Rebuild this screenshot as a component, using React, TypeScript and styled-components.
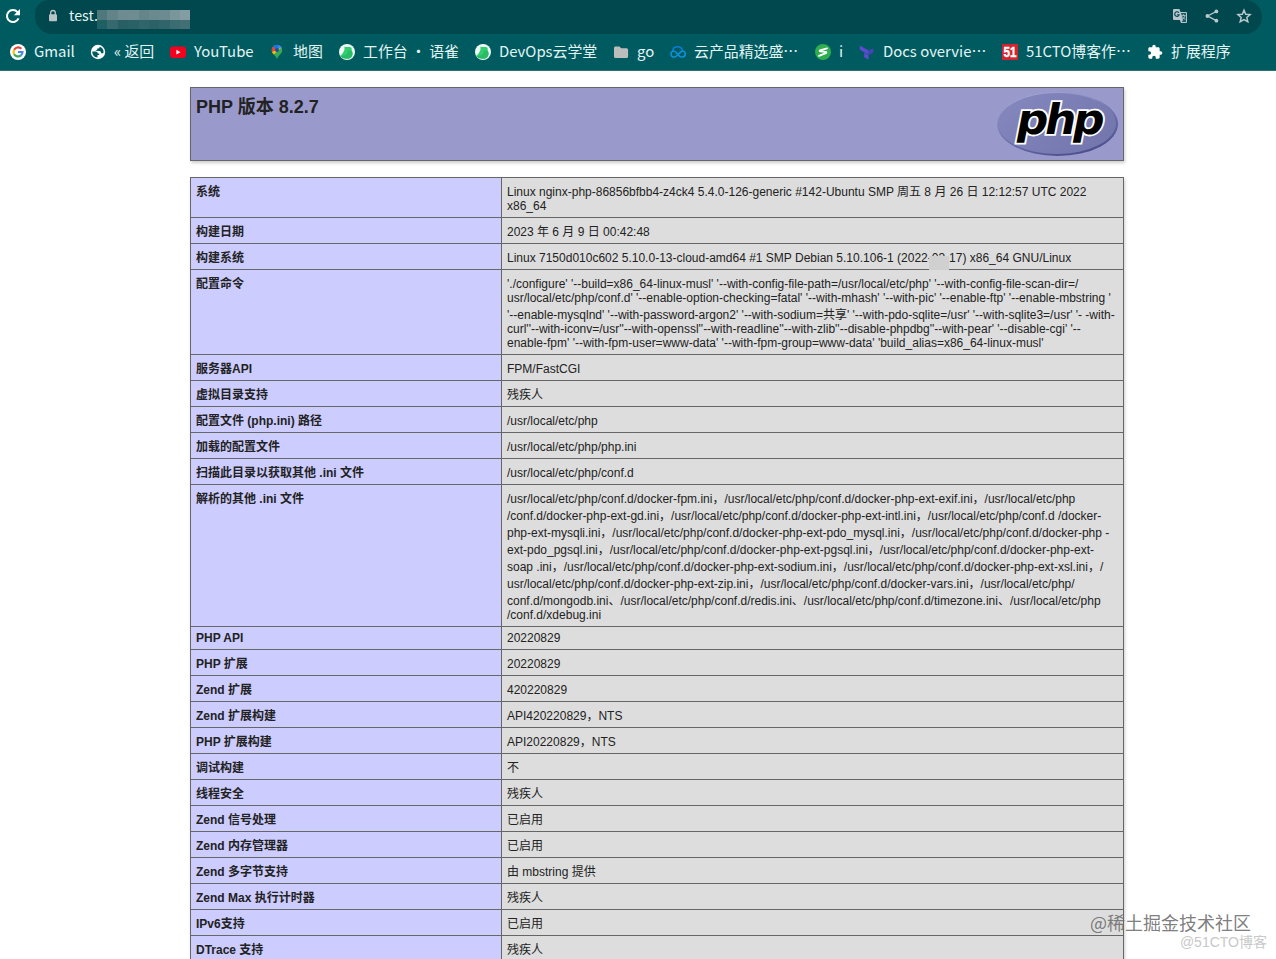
import React from 'react';
import styled, { createGlobalStyle } from 'styled-components';

const cjk = '"Noto Sans CJK SC", sans-serif';

const GlobalStyle = createGlobalStyle`
  * { box-sizing: border-box; }
  html, body { margin: 0; padding: 0; background: #fff; }
  body { overflow: hidden; font-family: "Liberation Sans", ${cjk}; color: #222; }
`;

const Window = styled.div`
  position: relative;
  height: 959px;
  overflow: hidden;
`;

const Browser = styled.header`
  height: 71px;
  background: #005b60;
  border-bottom: 1px solid #2b7074;
  font-family: ${cjk};
  color: #e3f4f5;
`;

const NavBar = styled.div`
  display: flex;
  height: 34px;
  padding: 0 14px 0 5px;
`;

const ReloadButton = styled.div`
  width: 30px;
  padding-top: 8px;
  line-height: 0;
`;

const AddressBar = styled.div`
  flex: 1;
  height: 34px;
  display: flex;
  align-items: center;
  padding: 0 10px 2px 10px;
  background: #00484d;
  border-radius: 14px 17px 17px 17px;
`;

const Address = styled.span`
  width: 28px;
  margin-left: 8px;
  padding-bottom: 2px;
  font-size: 14.3px;
  line-height: 22px;
`;

const RedactedHost = styled.svg`
  margin-top: 6px;
`;

const AddressActions = styled.div`
  display: flex;
  gap: 16px;
  margin-left: auto;
`;

const Bookmarks = styled.nav`
  display: flex;
  height: 35px;
  align-items: center;
  padding-left: 10px;
`;

const Bookmark = styled.div<{ $width: number }>`
  display: flex;
  flex: none;
  align-items: center;
  gap: 8px;
  width: ${(p) => p.$width}px;
  height: 22px;
  font-size: 14.9px;
  line-height: 22px;
  white-space: pre;

  svg { flex: none; }
`;

const Label = styled.span`
  display: flex;
  padding-bottom: 2px;
`;

const Content = styled.main`
  width: 934px;
  margin: 16px 0 0 190px;
`;

const Banner = styled.section`
  display: flex;
  justify-content: space-between;
  height: 74px;
  padding: 4px 5px;
  margin-bottom: 16px;
  border: 1px solid #666;
  background: #9999cc;
  box-shadow: 1px 2px 3px rgba(0, 0, 0, 0.2);
`;

const Title = styled.h1`
  margin: 0;
  padding-top: 2px;
  font-size: 18px;
  line-height: 26px;
`;

const InfoTable = styled.table`
  width: 934px;
  table-layout: fixed;
  border-collapse: collapse;
  box-shadow: 1px 2px 3px rgba(0, 0, 0, 0.2);
`;

const Name = styled.td`
  width: 311px;
  padding: 4px 5px;
  border: 1px solid #666;
  background: #ccccff;
  font-size: 12px;
  font-weight: bold;
  vertical-align: baseline;
`;

const Value = styled.td`
  padding: 4px 5px;
  border: 1px solid #666;
  background: #dddddd;
  font-size: 12px;
  vertical-align: baseline;
  white-space: pre;
`;

const Smudge = styled.span`
  position: absolute;
  left: 929px;
  top: 256px;
  width: 20px;
  height: 14px;
  background: #d0d0d0;
`;

const Watermark = styled.div<{ $right: number; $top: number; $size: number; $color: string; $font: string }>`
  position: absolute;
  right: ${(p) => p.$right}px;
  top: ${(p) => p.$top}px;
  font-family: ${(p) => p.$font};
  font-size: ${(p) => p.$size}px;
  line-height: 1;
  color: ${(p) => p.$color};
  white-space: nowrap;
`;

const GoogleIcon = () => (
  <svg width="16" height="16" viewBox="0 0 16 16" fill="none">
    <circle cx="8" cy="8" r="8" fill="#fff" />
    <g strokeWidth="2.1">
      <path d="M11.3 4.7A4.5 4.5 0 0 0 4.1 5.8" stroke="#ea4335" />
      <path d="M4.1 5.8A4.5 4.5 0 0 0 4.1 10.2" stroke="#fbbc05" />
      <path d="M4.1 10.2A4.5 4.5 0 0 0 10.9 11.4" stroke="#34a853" />
      <path d="M10.9 11.4A4.5 4.5 0 0 0 12.5 8H8" stroke="#4285f4" />
    </g>
  </svg>
);

const GlobeIcon = () => (
  <svg width="16" height="16" viewBox="0 0 16 16">
    <circle cx="8" cy="8" r="7.2" fill="#fff" />
    <path d="M2.3 7.6H5.6C7 7.6 7.8 8.4 7.8 9.6H9.2V11H7.5V13.5C4.4 13.5 2 10.9 2.3 7.6ZM9.6 2.7C9.6 4.4 8.7 4.6 7.2 4.6V6.2H5.8V7H9.5C10.6 7 11 7.7 11 9.3H13.3C14.3 6.5 12.5 3.3 9.6 2.7Z" fill="#005b60" />
  </svg>
);

const YouTubeIcon = () => (
  <svg width="16" height="16" viewBox="0 0 16 16">
    <rect y="2.5" width="16" height="11.5" rx="3" fill="#f5001d" />
    <path d="M6.4 5.8v4.8l4.1-2.4z" fill="#fff" />
  </svg>
);

const MapsIcon = () => (
  <svg width="16" height="16" viewBox="0 0 16 16">
    <path d="M8 .8a5.3 5.3 0 0 0-5.3 5.3C2.7 10 6.8 11 8 15.3 9.2 11 13.3 10 13.3 6.1A5.3 5.3 0 0 0 8 .8z" fill="#34a853" />
    <path d="M8 6L4 2.6A5.3 5.3 0 0 1 9.8 1.1z" fill="#1a73e8" />
    <path d="M8 6L9.8 1.1A5.3 5.3 0 0 1 12.6 3.5z" fill="#4285f4" />
    <path d="M8 6L4 2.6A5.3 5.3 0 0 0 3 8z" fill="#ea4335" />
    <path d="M3 8L12.6 3.4 4.8 10.6z" fill="#fbbc04" />
    <circle cx="8" cy="6.1" r="2" fill="#174ea6" />
  </svg>
);

const YuqueIcon = () => (
  <svg width="16" height="16" viewBox="0 0 16 16">
    <circle cx="8" cy="8" r="8" fill="#effcf5" />
    <path d="M5.2 2.6C7 3.8 9 2.4 11.6 3.3C13.5 4 12.3 5.5 13 7C14.8 11 12.5 14.8 7.8 14.8C4.8 15 2.5 13.6 1.3 11.8C3 10.5 4.3 8.5 5.2 6.5C6 4.5 5.3 3.7 5.2 2.6Z" fill="#32cd71" />
    <path d="M1.3 11.8C5.5 12.5 8.5 10.3 9.5 6.5L13 7C14.8 11 12.5 14.8 7.8 14.8C4.8 15 2.5 13.6 1.3 11.8Z" fill="#21b05c" opacity=".6" />
  </svg>
);

const FolderIcon = () => (
  <svg width="16" height="16" viewBox="0 0 16 16">
    <path d="M2.3 2.5h4.1l1.8 1.8h5.4A1.5 1.5 0 0 1 15.1 5.8v6.7a1.5 1.5 0 0 1-1.5 1.5H2.5A1.5 1.5 0 0 1 1 12.5V4a1.5 1.5 0 0 1 1.3-1.5z" fill="#bdbdbd" />
  </svg>
);

const CloudIcon = () => (
  <svg width="16" height="16" viewBox="0 0 16 16" fill="none" strokeWidth="1.5" strokeLinecap="round">
    <path d="M2.9 6.5C3.3 1.8 11 1.2 12.4 6.2" stroke="#087ddb" />
    <path d="M5.5 12.8L11 7.9C12 7 12.7 6.9 13 7C16.3 7.6 16 12.9 12.3 12.9H11.2C8 12.9 6.5 7 3.8 7C0 7 .1 12.9 4 12.9H5.5" stroke="#0a93de" />
  </svg>
);

const SwiftIcon = () => (
  <svg width="16" height="16" viewBox="0 0 16 16">
    <circle cx="8" cy="8" r="8" fill="#2fae4f" />
    <path d="M12 4.3L5 6.3C4.4 6.6 4.5 7.2 5.2 7.3L10.8 7.8C11.6 8 11.5 8.8 10.8 9.1L4 11.8" fill="none" stroke="#fff" strokeWidth="1.8" strokeLinecap="round" strokeLinejoin="round" />
  </svg>
);

const TerraformIcon = () => (
  <svg width="16" height="16" viewBox="0 0 16 16">
    <path d="M.8 1.5v4.300l4.400 2.400V3.900zM5.200 4v4.300l4.400 2.500V6.500zM5.200 8.800v4.500l4.400 2.400V11.200z" fill="#5b4bd0" />
    <path d="M9.900 6.600v4.300l4.400-2.400V4.200z" fill="#4a41bd" />
  </svg>
);

const CtoIcon = () => (
  <svg width="16" height="16" viewBox="0 0 16 16">
    <rect width="16" height="16" fill="#d4242f" />
    <text x="1.600" y="13.300" fontFamily="Liberation Sans, sans-serif" fontWeight="700" fontSize="15" textLength="13" lengthAdjust="spacingAndGlyphs" fill="#fff" stroke="#fff" strokeWidth=".4">51</text>
  </svg>
);

const PuzzleIcon = () => (
  <svg width="16" height="16" viewBox="0 0 24 24">
    <path fill="#fff" d="M20.5 11H19V7c0-1.1-.9-2-2-2h-4V3.5a2.500 2.500 0 0 0-5 0V5H4c-1.100 0-2 .9-2 2v3.800h1.500a2.700 2.700 0 0 1 0 5.400H2V20c0 1.100.9 2 2 2h3.800v-1.500a2.700 2.700 0 0 1 5.400 0V22H17c1.100 0 2-.9 2-2v-4h1.500a2.500 2.500 0 0 0 0-5z" />
  </svg>
);

const ReloadIcon = () => (
  <svg width="16" height="16" viewBox="0 0 16 16">
    <path d="M13.5 10.3A6 6 0 1 1 12.5 4.1" fill="none" stroke="#fff" strokeWidth="2" />
    <path d="M15 1v6.3H8.800z" fill="#fff" />
  </svg>
);

const LockIcon = () => (
  <svg width="16" height="16" viewBox="0 0 16 16">
    <rect x="4" y="6.3" width="8" height="7" rx="1" fill="#b9c4c6" />
    <path d="M5.7 7V4.8a2.3 2.3 0 0 1 4.6 0V7" fill="none" stroke="#b9c4c6" strokeWidth="1.3" />
  </svg>
);

const TranslateIcon = () => (
  <svg width="16" height="16" viewBox="0 0 16 16">
    <path d="M2 1h5.5l1 3H14a1 1 0 0 1 1 1v9a1 1 0 0 1-1 1H9l-1.2-3H2a1 1 0 0 1-1-1V2a1 1 0 0 1 1-1z" fill="#b7c4cb" />
    <path d="M9 5h5v9H9.8l1.200-2z" fill="#1a5b61" />
    <path d="M6.9 4.8A2.3 2.3 0 1 0 7.2 6.7H5.2" fill="none" stroke="#00484d" strokeWidth="1.1" />
    <path d="M9.5 7.4h4M11.5 6.3v1.1M13 7.5c-.5 2-1.5 3-2.5 3.8M10.3 8.5l3 3.3" fill="none" stroke="#b7c4cb" strokeWidth=".9" />
  </svg>
);

const ShareIcon = () => (
  <svg width="16" height="16" viewBox="0 0 16 16" fill="#b9c8ce">
    <path d="M12.3 3.5L3.6 8l8.7 4.7" fill="none" stroke="#b9c8ce" strokeWidth="1.4" />
    <circle cx="12.4" cy="3.4" r="1.9" />
    <circle cx="3.4" cy="8" r="1.9" />
    <circle cx="12.4" cy="12.7" r="1.9" />
  </svg>
);

const StarIcon = () => (
  <svg width="16" height="16" viewBox="0 0 16 16">
    <path d="M8 2.2l1.7 4 4.4.4-3.3 2.9 1 4.2L8 11.5l-3.8 2.2 1-4.2-3.300-2.900 4.400-.4z" fill="none" stroke="#b9c8ce" strokeWidth="1.5" />
  </svg>
);

const PhpLogo = () => (
  <svg width="121" height="66" viewBox="0 0 121 66">
    <defs>
      <linearGradient id="rim" x1="0.2" y1="0" x2="0.7" y2="1">
        <stop offset="0" stopColor="#aaaed8" />
        <stop offset=".45" stopColor="#777bb3" />
        <stop offset="1" stopColor="#484c89" />
      </linearGradient>
      <linearGradient id="face" x1="0" y1="0" x2="1" y2="0.6">
        <stop offset="0" stopColor="#8589be" />
        <stop offset="1" stopColor="#7377ae" />
      </linearGradient>
    </defs>
    <ellipse cx="60.5" cy="32" rx="60.5" ry="32" fill="url(#rim)" />
    <ellipse cx="60" cy="31.5" rx="59" ry="30.5" fill="url(#face)" />
    <g transform="translate(17.5 41.5) skewX(-11) scale(1.05 1)" fontFamily="DejaVu Sans, sans-serif" fontSize="42" fontWeight="700">
      <text letterSpacing="-3.2" fill="#000" stroke="#fff" strokeWidth="3.6" paintOrder="stroke">php</text>
    </g>
  </svg>
);

const bookmarks: [React.FC, string, number, boolean?][] = [
  [GoogleIcon, 'Gmail', 80],
  [GlobeIcon, '« 返回', 80],
  [YouTubeIcon, 'YouTube', 99],
  [MapsIcon, '地图', 70],
  [YuqueIcon, '工作台 · 语雀', 136],
  [YuqueIcon, 'DevOps云学堂', 138],
  [FolderIcon, 'go', 57],
  [CloudIcon, '云产品精选盛', 145, true],
  [SwiftIcon, 'i', 44],
  [TerraformIcon, 'Docs overvie', 143, true],
  [CtoIcon, '51CTO博客作', 145, true],
  [PuzzleIcon, '扩展程序', 90],
];

const rows: [string, string][] = [
  ['系统', 'Linux nginx-php-86856bfbb4-z4ck4 5.4.0-126-generic #142-Ubuntu SMP 周五 8 月 26 日 12:12:57 UTC 2022\nx86_64'],
  ['构建日期', '2023 年 6 月 9 日 00:42:48'],
  ['构建系统', 'Linux 7150d010c602 5.10.0-13-cloud-amd64 #1 SMP Debian 5.10.106-1 (2022-03-17) x86_64 GNU/Linux'],
  ['配置命令', `'./configure' '--build=x86_64-linux-musl' '--with-config-file-path=/usr/local/etc/php' '--with-config-file-scan-dir=/
usr/local/etc/php/conf.d' '--enable-option-checking=fatal' '--with-mhash' '--with-pic' '--enable-ftp' '--enable-mbstring '
'--enable-mysqlnd' '--with-password-argon2' '--with-sodium=共享' '--with-pdo-sqlite=/usr' '--with-sqlite3=/usr' '- -with-
curl''--with-iconv=/usr''--with-openssl''--with-readline''--with-zlib''--disable-phpdbg''--with-pear' '--disable-cgi' '--
enable-fpm' '--with-fpm-user=www-data' '--with-fpm-group=www-data' 'build_alias=x86_64-linux-musl'`],
  ['服务器API', 'FPM/FastCGI'],
  ['虚拟目录支持', '残疾人'],
  ['配置文件 (php.ini) 路径', '/usr/local/etc/php'],
  ['加载的配置文件', '/usr/local/etc/php/php.ini'],
  ['扫描此目录以获取其他 .ini 文件', '/usr/local/etc/php/conf.d'],
  ['解析的其他 .ini 文件', `/usr/local/etc/php/conf.d/docker-fpm.ini，/usr/local/etc/php/conf.d/docker-php-ext-exif.ini，/usr/local/etc/php
/conf.d/docker-php-ext-gd.ini，/usr/local/etc/php/conf.d/docker-php-ext-intl.ini，/usr/local/etc/php/conf.d /docker-
php-ext-mysqli.ini，/usr/local/etc/php/conf.d/docker-php-ext-pdo_mysql.ini，/usr/local/etc/php/conf.d/docker-php -
ext-pdo_pgsql.ini，/usr/local/etc/php/conf.d/docker-php-ext-pgsql.ini，/usr/local/etc/php/conf.d/docker-php-ext-
soap .ini，/usr/local/etc/php/conf.d/docker-php-ext-sodium.ini，/usr/local/etc/php/conf.d/docker-php-ext-xsl.ini，/
usr/local/etc/php/conf.d/docker-php-ext-zip.ini，/usr/local/etc/php/conf.d/docker-vars.ini，/usr/local/etc/php/
conf.d/mongodb.ini、/usr/local/etc/php/conf.d/redis.ini、/usr/local/etc/php/conf.d/timezone.ini、/usr/local/etc/php
/conf.d/xdebug.ini`],
  ['PHP API', '20220829'],
  ['PHP 扩展', '20220829'],
  ['Zend 扩展', '420220829'],
  ['Zend 扩展构建', 'API420220829，NTS'],
  ['PHP 扩展构建', 'API20220829，NTS'],
  ['调试构建', '不'],
  ['线程安全', '残疾人'],
  ['Zend 信号处理', '已启用'],
  ['Zend 内存管理器', '已启用'],
  ['Zend 多字节支持', '由 mbstring 提供'],
  ['Zend Max 执行计时器', '残疾人'],
  ['IPv6支持', '已启用'],
  ['DTrace 支持', '残疾人'],
];

const mosaic = [
  ['#4f787c', '#628488', '#6d8b90', '#6f8d91', '#64868a', '#6a8a8e', '#6b8b90', '#7b969b', '#849da2'],
  ['#1f6064', '#35696e', '#285f65', '#2a6166', '#30666a', '#2b6267', '#30666b', '#3a6c71', '#416f74'],
];

export default function App() {
  return (
    <Window>
      <GlobalStyle />
      <Browser>
        <NavBar>
          <ReloadButton><ReloadIcon /></ReloadButton>
          <AddressBar>
            <LockIcon />
            <Address>test.</Address>
            <RedactedHost width="93" height="19" shapeRendering="crispEdges">
              {mosaic.map((line, y) =>
                line.map((c, x) => <rect key={`${x}-${y}`} x={x * 10.4} y={y * 10} width="10.4" height={y ? 9 : 10} fill={c} />)
              )}
            </RedactedHost>
            <AddressActions>
              <TranslateIcon />
              <ShareIcon />
              <StarIcon />
            </AddressActions>
          </AddressBar>
        </NavBar>
        <Bookmarks>
          {bookmarks.map(([Icon, label, width, clipped]) => (
            <Bookmark key={label} $width={width}>
              <Icon />
              <Label>
                {label}
                {clipped && <span lang="zh-CN">⋯</span>}
              </Label>
            </Bookmark>
          ))}
        </Bookmarks>
      </Browser>
      <Content>
        <Banner>
          <Title>PHP 版本 8.2.7</Title>
          <PhpLogo />
        </Banner>
        <InfoTable>
          <tbody>
            {rows.map(([name, value]) => (
              <tr key={name}>
                <Name>{name}</Name>
                <Value>{value}</Value>
              </tr>
            ))}
          </tbody>
        </InfoTable>
      </Content>
      <Smudge />
      <Watermark $right={25} $top={913} $size={18} $color="rgba(110, 110, 110, 0.9)" $font={cjk}>@稀土掘金技术社区</Watermark>
      <Watermark $right={9} $top={935} $size={14} $color="#c8c8c8" $font={`"Liberation Sans", ${cjk}`}>@51CTO博客</Watermark>
    </Window>
  );
}
